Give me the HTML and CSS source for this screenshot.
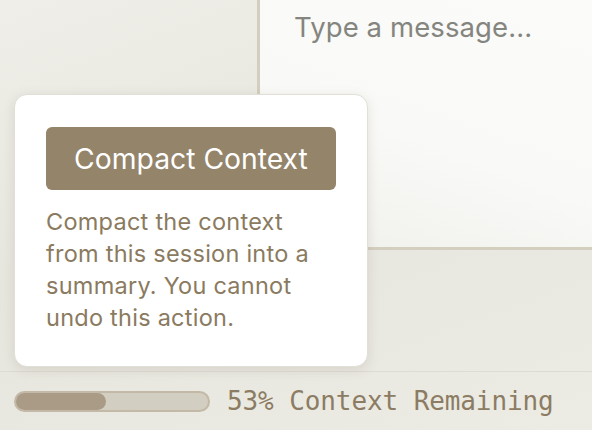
FILE: index.html
```html
<!DOCTYPE html>
<html>
<head>
<meta charset="utf-8">
<link rel="stylesheet" href="styles.css">
</head>
<body>
<div class="app">
  <div class="main">
    <div class="side"></div>
    <div class="composer">
      <div class="placeholder">Type a message...</div>
    </div>
  </div>
  <div class="footer">
    <div class="meter"><div class="meter-fill" style="width: 47%"></div></div>
    <div class="meter-label">53% Context Remaining</div>
  </div>
  <div class="popover">
    <button class="compact-btn">Compact Context</button>
    <p class="popover-text">Compact the context from this session into a summary. You cannot undo this action.</p>
  </div>
</div>
</body>
</html>
```

FILE: styles.css
```css
* { box-sizing: border-box; }
html, body {
  margin: 0;
  padding: 0;
  width: 592px;
  height: 430px;
  overflow: hidden;
}
body {
  font-family: Inter, "Noto Sans", sans-serif;
  background: linear-gradient(160deg, #efeee8 0%, #e7e6de 45%, #ecebe4 100%);
}
.app {
  position: relative;
  width: 592px;
  height: 430px;
  display: flex;
  flex-direction: column;
}
.main {
  height: 371px;
  display: flex;
  align-items: flex-start;
}
.side {
  width: 257px;
  flex: none;
}
.composer {
  flex: 1;
  height: 250px;
  border-left: 3px solid #d4cebf;
  border-bottom: 3px solid #d4cebf;
  background: linear-gradient(200deg, #fbfbf9 0%, #f9f9f7 55%, #efefeb 100%);
  padding: 11px 0 0 34px;
}
.placeholder {
  font-size: 27.5px;
  color: #85857f;
  line-height: 32px;
  letter-spacing: 0.1px;
}
.footer {
  flex: 1;
  border-top: 1px solid #dddbd2;
  display: flex;
  align-items: center;
  padding: 0 0 0 14px;
  gap: 17px;
}
.meter {
  width: 196px;
  height: 21px;
  border-radius: 11px;
  border: 2px solid #c3b9a6;
  background: #d2cec1;
  overflow: hidden;
}
.meter-fill {
  height: 100%;
  background: #a99b85;
  border-radius: 0 9px 9px 0;
}
.meter-label {
  font-family: "DejaVu Sans Mono", "Liberation Mono", monospace;
  font-size: 26px;
  color: #8c7c63;
  letter-spacing: -0.1px;
}
.popover {
  position: absolute;
  left: 14px;
  top: 94px;
  width: 354px;
  height: 273px;
  background: #ffffff;
  border: 1px solid #e2dfd7;
  border-radius: 13px;
  box-shadow: 0 3px 12px rgba(110, 100, 80, 0.16);
  padding: 32px 31px 0 31px;
}
.compact-btn {
  display: block;
  width: 290px;
  height: 63px;
  border: none;
  border-radius: 6px;
  background: #94846a;
  color: #ffffff;
  font-family: Inter, "Noto Sans", sans-serif;
  font-size: 28.3px;
  padding: 0;
}
.popover-text {
  margin: 16px 0 0 0;
  font-size: 23.5px;
  line-height: 32px;
  color: #8a7a60;
  letter-spacing: 0.25px;
}
```
